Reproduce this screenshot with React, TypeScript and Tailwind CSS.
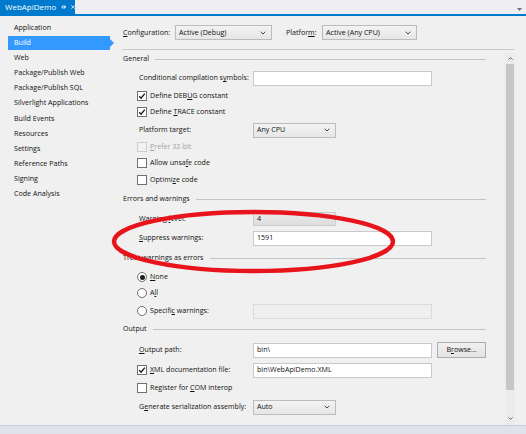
import React from "react";

const U: React.FC<{ children: React.ReactNode }> = ({ children }) => (
  <span className="underline underline-offset-[1px] decoration-[0.7px]">{children}</span>
);

const Chevron: React.FC = () => (
  <svg width="6" height="4" viewBox="0 0 6 4" className="shrink-0">
    <path d="M0.7 0.8 L3 3 L5.3 0.8" fill="none" stroke="#444" strokeWidth="1" />
  </svg>
);

const Combo: React.FC<{ w: string; value: string }> = ({ w, value }) => (
  <div
    className={`${w} h-[15px] border border-[#bcbcbc] bg-gradient-to-b from-[#f3f3f3] to-[#e6e6e6] flex items-center justify-between pl-[3px] pr-[5px]`}
  >
    <span>{value}</span>
    <Chevron />
  </div>
);

const TextBox: React.FC<{ w: string; value?: string; disabled?: boolean }> = ({
  w,
  value,
  disabled,
}) => (
  <div
    className={`${w} h-[15px] border flex items-center pl-[3px] ${
      disabled ? "bg-[#efefef] border-[#dadada]" : "bg-white border-[#c9c9c9]"
    }`}
  >
    {value}
  </div>
);

const Check: React.FC<{ checked?: boolean; disabled?: boolean }> = ({ checked, disabled }) => (
  <div
    className={`w-[10px] h-[10px] border shrink-0 flex items-center justify-center ${
      disabled ? "border-[#cfcfcf] bg-[#f2f2f2]" : "border-[#707070] bg-white"
    }`}
  >
    {checked && (
      <svg width="8" height="8" viewBox="0 0 8 8">
        <path d="M1.2 4.2 L3.1 6.2 L6.8 1.6" fill="none" stroke="#1e1e1e" strokeWidth="1.4" />
      </svg>
    )}
  </div>
);

const Radio: React.FC<{ checked?: boolean }> = ({ checked }) => (
  <div className="w-[10px] h-[10px] rounded-full border border-[#707070] bg-white shrink-0 flex items-center justify-center">
    {checked && <div className="w-[5px] h-[5px] rounded-full bg-[#1e1e1e]" />}
  </div>
);

const Row: React.FC<{ h: string; children: React.ReactNode }> = ({ h, children }) => (
  <div className={`${h} shrink-0`}>
    <div className="h-[16px] flex items-center">{children}</div>
  </div>
);

const Header: React.FC<{ title: string }> = ({ title }) => (
  <div className="flex items-center pl-[7px] pr-[19px] w-full">
    <span>{title}</span>
    <div className="flex-1 ml-[6px] h-px bg-[#c4c4c4]" />
  </div>
);

const navItems = [
  "Application",
  "Build",
  "Web",
  "Package/Publish Web",
  "Package/Publish SQL",
  "Silverlight Applications",
  "Build Events",
  "Resources",
  "Settings",
  "Reference Paths",
  "Signing",
  "Code Analysis",
];

export default function App() {
  return (
    <div className="w-[526px] h-[434px] relative overflow-hidden flex flex-col bg-[#f0f0f0] text-[#111] text-[7.1px] leading-none font-['Open_Sans',sans-serif]">
      {/* document tab strip */}
      <div className="h-[14px] bg-[#eeeef2] flex justify-between shrink-0">
        <div className="w-[75px] bg-[#007acc] text-white flex items-center pl-[5px] text-[8px]">
          <span>WebApiDemo</span>
          <svg width="8" height="6" viewBox="0 0 8 6" className="ml-[5px]">
            <path d="M0 3h2.5 M2.5 0.8v4.4 M2.5 1.5h4v3h-4 M5 1.5v3" fill="none" stroke="#fff" strokeWidth="0.9" />
          </svg>
          <svg width="6" height="6" viewBox="0 0 6 6" className="ml-[4px]">
            <path d="M0.5 0.5 L5.5 5.5 M5.5 0.5 L0.5 5.5" stroke="#fff" strokeWidth="1.1" />
          </svg>
        </div>
        <div className="flex items-end pb-[3px] pr-[4px]">
          <svg width="5" height="3" viewBox="0 0 5 3">
            <path d="M0 0h5L2.5 3z" fill="#717171" />
          </svg>
        </div>
      </div>
      <div className="h-[2px] bg-[#007acc] shrink-0" />

      <div className="flex-1 flex min-h-0">
        {/* left navigation */}
        <div className="w-[116px] shrink-0 pt-[4px]">
          {navItems.map((item) =>
            item === "Build" ? (
              <div key={item} className="h-[15.1px] flex items-center">
                <div className="ml-[8px] w-[102px] h-[14px] bg-[#3399ff] text-white flex items-center pl-[6px]">
                  {item}
                </div>
                <div className="w-0 h-0 border-y-[4px] border-y-transparent border-l-[4px] border-l-[#3399ff]" />
              </div>
            ) : (
              <div key={item} className="h-[15.1px] flex items-center pl-[14px]">
                {item}
              </div>
            )
          )}
        </div>

        {/* property page */}
        <div className="flex-1 flex flex-col min-w-0">
          <div className="h-[34px] shrink-0 ml-[6px] mr-[12px] border-b border-[#c9c9c9] flex items-center pl-[1px]">
            <span className="w-[52px]">
              <U>C</U>onfiguration:
            </span>
            <Combo w="w-[97px]" value="Active (Debug)" />
            <span className="ml-[14px] w-[36px]">
              Platfor<U>m</U>:
            </span>
            <Combo w="w-[95px]" value="Active (Any CPU)" />
          </div>

          <div className="flex-1 flex min-h-0">
            <div className="flex-1 flex flex-col pt-[1px]">
              <Row h="h-[19px]">
                <Header title="General" />
              </Row>
              <Row h="h-[18px]">
                <span className="pl-[23px] w-[137px]">
                  Conditional compilation s<U>y</U>mbols:
                </span>
                <TextBox w="w-[179px]" />
              </Row>
              <Row h="h-[16px]">
                <div className="pl-[21px] flex items-center">
                  <Check checked />
                  <span className="ml-[3px]">
                    Define DEB<U>U</U>G constant
                  </span>
                </div>
              </Row>
              <Row h="h-[18px]">
                <div className="pl-[21px] flex items-center">
                  <Check checked />
                  <span className="ml-[3px]">
                    Define <U>T</U>RACE constant
                  </span>
                </div>
              </Row>
              <Row h="h-[17px]">
                <span className="pl-[23px] w-[137px]">Platform target:</span>
                <Combo w="w-[83px]" value="Any CPU" />
              </Row>
              <Row h="h-[16px]">
                <div className="pl-[21px] flex items-center text-[#a2a2a2]">
                  <Check disabled />
                  <span className="ml-[3px]">
                    <U>P</U>refer 32-bit
                  </span>
                </div>
              </Row>
              <Row h="h-[17px]">
                <div className="pl-[21px] flex items-center">
                  <Check />
                  <span className="ml-[3px]">
                    Allow unsa<U>f</U>e code
                  </span>
                </div>
              </Row>
              <Row h="h-[19px]">
                <div className="pl-[21px] flex items-center">
                  <Check />
                  <span className="ml-[3px]">
                    Optimi<U>z</U>e code
                  </span>
                </div>
              </Row>
              <Row h="h-[20px]">
                <Header title="Errors and warnings" />
              </Row>
              <Row h="h-[19px]">
                <span className="pl-[23px] w-[137px]">
                  Warning <U>l</U>evel:
                </span>
                <div className="w-[83px] h-[14px] border border-[#cbcbcb] bg-gradient-to-b from-[#e9e9e9] to-[#dedede] flex items-center pl-[3px]">
                  4
                </div>
              </Row>
              <Row h="h-[20px]">
                <span className="pl-[23px] w-[137px]">
                  <U>S</U>uppress warnings:
                </span>
                <TextBox w="w-[179px]" value="1591" />
              </Row>
              <Row h="h-[19px]">
                <Header title="Treat warnings as errors" />
              </Row>
              <Row h="h-[16px]">
                <div className="pl-[21px] flex items-center">
                  <Radio checked />
                  <span className="ml-[3px]">
                    <U>N</U>one
                  </span>
                </div>
              </Row>
              <Row h="h-[18px]">
                <div className="pl-[21px] flex items-center">
                  <Radio />
                  <span className="ml-[3px]">
                    A<U>l</U>l
                  </span>
                </div>
              </Row>
              <Row h="h-[18px]">
                <div className="pl-[21px] flex items-center w-[137px]">
                  <Radio />
                  <span className="ml-[3px]">
                    Specifi<U>c</U> warnings:
                  </span>
                </div>
                <TextBox w="w-[179px]" disabled />
              </Row>
              <Row h="h-[21px]">
                <Header title="Output" />
              </Row>
              <Row h="h-[20px]">
                <span className="pl-[23px] w-[137px]">
                  <U>O</U>utput path:
                </span>
                <TextBox w="w-[179px]" value="bin\" />
                <div className="ml-[5px] w-[49px] h-[16px] border border-[#adadad] bg-gradient-to-b from-[#f0f0f0] to-[#e3e3e3] flex items-center justify-center">
                  B<U>r</U>owse...
                </div>
              </Row>
              <Row h="h-[18px]">
                <div className="pl-[21px] flex items-center w-[137px]">
                  <Check checked />
                  <span className="ml-[3px]">
                    <U>X</U>ML documentation file:
                  </span>
                </div>
                <TextBox w="w-[179px]" value="bin\WebApiDemo.XML" />
              </Row>
              <Row h="h-[19px]">
                <div className="pl-[21px] flex items-center">
                  <Check />
                  <span className="ml-[3px]">
                    Register for <U>C</U>OM interop
                  </span>
                </div>
              </Row>
              <Row h="h-[20px]">
                <span className="pl-[23px] w-[137px]">
                  G<U>e</U>nerate serialization assembly:
                </span>
                <Combo w="w-[83px]" value="Auto" />
              </Row>
            </div>

            {/* vertical scrollbar */}
            <div className="w-[10px] mr-[11px] mt-[3px] flex flex-col items-center bg-[#ececee]">
              <div className="h-[11px] flex items-center justify-center">
                <svg width="5" height="3" viewBox="0 0 5 3">
                  <path d="M0.5 2.6 L2.5 0.6 L4.5 2.6" fill="none" stroke="#555" strokeWidth="0.9" />
                </svg>
              </div>
              <div className="w-[8px] h-[326px] bg-[#c6c6c6]" />
              <div className="flex-1" />
              <div className="h-[14px] flex items-center justify-center">
                <svg width="5" height="3" viewBox="0 0 5 3">
                  <path d="M0.5 0.4 L2.5 2.4 L4.5 0.4" fill="none" stroke="#555" strokeWidth="0.9" />
                </svg>
              </div>
            </div>
          </div>
        </div>
      </div>

      <div className="h-[9px] shrink-0 bg-[#dfe2ea] border-t border-[#c9ccd4]" />

      {/* red annotation ellipse */}
      <svg
        className="absolute inset-0 pointer-events-none"
        width="526"
        height="434"
        viewBox="0 0 526 434"
      >
        <ellipse cx="253.5" cy="241.5" rx="139.5" ry="29.5" fill="none" stroke="#e8141c" strokeWidth="4.5" />
      </svg>
    </div>
  );
}
